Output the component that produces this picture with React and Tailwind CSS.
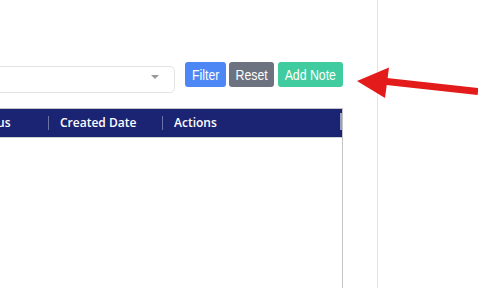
import React from 'react';

const columns = [
  { label: 'Status', width: 'w-[86px]' },
  { label: 'Created Date', width: 'w-[114px]' },
  { label: 'Actions', width: 'w-[180px]' },
];

const buttons = [
  { label: 'Filter', className: 'w-[41px] ml-[10px] bg-[#4d87f5]' },
  { label: 'Reset', className: 'w-[45px] ml-[3px] bg-[#6c7280]' },
  { label: 'Add Note', className: 'w-[65px] ml-[4px] bg-[#40cc9e]' },
];

function Arrow() {
  return (
    <svg className="absolute left-0 top-0 pointer-events-none" width="478" height="288" viewBox="0 0 478 288">
      <line x1="382" y1="81" x2="478" y2="91.5" stroke="#e31b1b" strokeWidth="7" />
      <polygon points="357,81 389,67.5 385,98" fill="#e31b1b" />
    </svg>
  );
}

export default function App() {
  return (
    <div className="relative w-[478px] h-[288px] bg-white overflow-hidden font-['Liberation_Sans',Arial,sans-serif]">
      <div className="flex h-full">
        {/* Main content, clipped on the left */}
        <div className="w-[378px] h-full border-r border-[#dfe4f7] overflow-hidden flex flex-col items-end pr-[34px]">
          {/* Filter row */}
          <div className="flex items-start mt-[62px] shrink-0">
            <div className="relative shrink-0 w-[260px] h-[27px] border border-[#e3e3e3] rounded-[5px] bg-white mt-[4px]">
              <span className="absolute right-[15px] top-[8px] w-0 h-0 border-l-[4px] border-r-[4px] border-t-[4px] border-l-transparent border-r-transparent border-t-[#999]" />
            </div>
            {buttons.map((b) => (
              <button key={b.label} className={`${b.className} shrink-0 h-[25px] rounded-[3px] flex items-center justify-center text-white`}>
                <span className="inline-block whitespace-nowrap text-[15px] leading-none scale-x-[0.82]">{b.label}</span>
              </button>
            ))}
          </div>

          {/* Table */}
          <div className="mt-[15px] flex-1 border-t border-r border-[#c4c4c4] shrink-0">
            <div className="flex items-center h-[29px] bg-[#1b2473] border-b border-[#d0d0d0] relative font-['Open_Sans',sans-serif]">
              {columns.map((c, i) => (
                <div key={c.label} className={`${c.width} shrink-0 h-full flex items-center relative`}>
                  {i > 0 && <span className="absolute left-0 top-[7px] h-[14px] w-px bg-[#6b74a8]" />}
                  <span className="pl-[12px] whitespace-nowrap text-white text-[12px] font-semibold">{c.label}</span>
                </div>
              ))}
              <span className="absolute right-0 top-[4px] h-[17px] w-[2px] bg-[#9aa0c0]" />
            </div>
          </div>
        </div>
      </div>
      <Arrow />
    </div>
  );
}
